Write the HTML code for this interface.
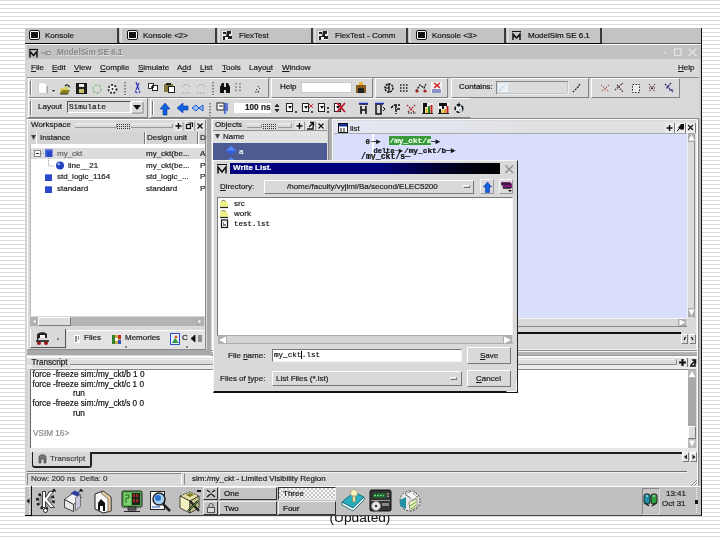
<!DOCTYPE html>
<html>
<head>
<meta charset="utf-8">
<title>ModelSim Write List</title>
<style>
html,body{margin:0;padding:0;}
body{width:720px;height:540px;overflow:hidden;position:relative;
 background:repeating-linear-gradient(to bottom,#dcdcdc 0,#dcdcdc 1px,#fff 1px,#fff 4px);
 font-family:"Liberation Sans",sans-serif;font-size:8px;color:#1c1c1c;}
.a{position:absolute;box-sizing:border-box;}
.t{position:absolute;white-space:nowrap;line-height:10px;font-size:8px;-webkit-text-stroke:0.200px currentColor;}
.m{font-family:"Liberation Mono",monospace;}
svg{position:absolute;overflow:visible;}
#desk{left:25px;top:28px;width:677px;height:488px;background:#d9d9d9;overflow:hidden;}
#cap{left:0;top:509.500px;width:720px;text-align:center;font-size:13.700px;line-height:16px;color:#111;}
.tab{top:0;height:15px;background:#c3c3c3;border-right:2px solid #3a3a3a;}
.tab .t{top:3px;left:20px;color:#1a1a1a;}
.rb{border:1px solid;border-color:#fff #7a7a7a #7a7a7a #fff;}
.sb{border:1px solid;border-color:#7a7a7a #fff #fff #7a7a7a;}
.grp{top:50px;height:20px;border:1px solid;border-color:#fff #808080 #808080 #fff;}
.grp2{top:70px;height:20px;border:1px solid;border-color:#fff #808080 #808080 #fff;}
.grip{position:absolute;left:1px;top:2px;width:1px;height:14px;background:#777;border-right:1px solid #fff;}
.ic{position:absolute;}
.pb{background:#c4c4c4;border:1px solid;border-color:#eee #333 #333 #eee;height:13px;}
</style>
</head>
<body>
<div id="cap" class="a" style="will-change:transform">(Updated)</div>
<div id="desk" class="a"><div id="in" class="a" style="left:0;top:0;width:677px;height:488px;will-change:transform;">
<!-- TOP TASK BAR -->
<div class="a" style="left:0;top:0;width:677px;height:16px;background:#c3c3c3;"></div>
<div class="a" style="left:0;top:14px;width:577px;height:1px;background:#777;"></div>
<div class="a" style="left:0;top:15px;width:677px;height:1px;background:#585858;"></div><div class="a" style="left:0;top:15px;width:577px;height:1px;background:#000;"></div>
<div class="a" style="left:0;top:16px;width:677px;height:1px;background:#fff;"></div>
<div class="a tab" style="left:0;width:94px;"><span class="t">Konsole</span><svg style="left:4px;top:2px" width="11" height="10"><rect x="0.500" y="0.500" width="10" height="9" rx="1.500" fill="#fff" stroke="#111"/><rect x="2" y="2" width="7" height="6" fill="#111"/></svg></div>
<div class="a tab" style="border-left:2px solid #dadada;left:95px;width:97px;"><span class="t" style="left:21px">Konsole &lt;2&gt;</span><svg style="left:5px;top:2px" width="11" height="10"><rect x="0.500" y="0.500" width="10" height="9" rx="1.500" fill="#fff" stroke="#111"/><rect x="2" y="2" width="7" height="6" fill="#111"/></svg></div>
<div class="a tab" style="border-left:2px solid #dadada;left:193px;width:95px;"><span class="t" style="left:19px">FlexTest</span><svg style="left:2px;top:2px" width="11" height="11"><rect x="0" y="1" width="10" height="9" fill="#eee"/><path d="M1 2h3v2h-3zM5 1h4v3h-2v2h3v3h-4v-2h-3v3h-2v-4h3z" fill="#222"/></svg></div>
<div class="a tab" style="border-left:2px solid #dadada;left:289px;width:94px;"><span class="t" style="left:19px">FlexTest - Comm</span><svg style="left:2px;top:2px" width="11" height="11"><rect x="0" y="1" width="10" height="9" fill="#eee"/><path d="M1 2h3v2h-3zM5 1h4v3h-2v2h3v3h-4v-2h-3v3h-2v-4h3z" fill="#222"/></svg></div>
<div class="a tab" style="border-left:2px solid #dadada;left:384px;width:97px;"><span class="t" style="left:21px">Konsole &lt;3&gt;</span><svg style="left:5px;top:2px" width="11" height="10"><rect x="0.500" y="0.500" width="10" height="9" rx="1.500" fill="#fff" stroke="#111"/><rect x="2" y="2" width="7" height="6" fill="#111"/></svg></div>
<div class="a tab" style="border-left:2px solid #dadada;left:482px;width:95px;background:#c6c6c6"><span class="t" style="left:19px;color:#111">ModelSim SE 6.1</span>
 <svg style="left:3px;top:3px" width="10" height="10"><path d="M0 0.500h9" stroke="#111"/><path d="M1 9V3l3.500 4L8 3v6" fill="none" stroke="#111" stroke-width="1.500"/></svg></div>

<!-- MODELSIM TITLE BAR -->
<div class="a" style="left:0;top:17px;width:677px;height:14px;background:#c2c2c2;"></div>
<div class="a" style="left:0;top:17px;width:2px;height:441px;background:#d4d4d4;"></div>
<svg style="left:4px;top:21px" width="10" height="9"><path d="M0 0.500h9" stroke="#111" stroke-width="1.200"/><path d="M1 8.500V2.500l3.500 4 3.500-4v6" fill="none" stroke="#111" stroke-width="1.500"/></svg>
<svg style="left:16px;top:21.500px" width="10" height="7"><path d="M0 3h5M5 0.500v5M6 1.500h3v3h-3z" stroke="#8a8a8a" fill="#eee"/></svg>
<span class="t" style="left:32px;top:20px;font-size:8.200px;font-weight:bold;color:#8e8e8e;text-shadow:0.700px 0.700px 0 #e4e4e4;">ModelSim SE 6.1</span>
<svg style="left:638px;top:20px" width="36" height="9"><rect x="1" y="4" width="1.500" height="1.500" fill="#e8e8e8"/><rect x="11.500" y="1" width="6.500" height="6.500" fill="none" stroke="#e8e8e8" stroke-width="1.100"/><path d="M25.500 0.500l8 7.500M33.500 0.500l-8 7.500" stroke="#e6e6e6" stroke-width="1.100"/></svg>

<!-- MENU BAR -->
<span class="t" style="left:6px;top:35px;"><u>F</u>ile</span>
<span class="t" style="left:27px;top:35px;"><u>E</u>dit</span>
<span class="t" style="left:49px;top:35px;"><u>V</u>iew</span>
<span class="t" style="left:75px;top:35px;"><u>C</u>ompile</span>
<span class="t" style="left:113px;top:35px;"><u>S</u>imulate</span>
<span class="t" style="left:152px;top:35px;">A<u>d</u>d</span>
<span class="t" style="left:175px;top:35px;"><u>L</u>ist</span>
<span class="t" style="left:197px;top:35px;"><u>T</u>ools</span>
<span class="t" style="left:224px;top:35px;">Layo<u>u</u>t</span>
<span class="t" style="left:257px;top:35px;"><u>W</u>indow</span>
<span class="t" style="left:653px;top:35px;"><u>H</u>elp</span>
<div class="a" style="left:2px;top:49px;width:673px;height:1px;background:#8a8a8a;"></div>
<!-- TOOLBAR ROW 1 -->
<div class="a grp" style="left:3px;width:241px;"><div class="grip"></div></div>
<div class="a grp" style="left:246px;width:102px;"></div>
<div class="a grp" style="left:350px;width:73px;"></div>
<div class="a grp" style="left:426px;width:138px;"></div>
<div class="a grp" style="left:566px;width:89px;"></div>
<svg style="left:0;top:50px" width="677" height="20">
 <!-- new -->
 <path d="M13.5 4.5h6l3 3v8h-9z" fill="#fff" stroke="#bbb" stroke-width="0.6"/><path d="M22 8v7" stroke="#888"/>
 <path d="M27 12h3l-1.5 2z" fill="#222"/>
 <!-- open -->
 <path d="M35 10h3l1-1h4v6h-8z" fill="#d8d060"/><path d="M35 16l2-4h8l-2 4z" fill="#8a8018"/><path d="M35 16h8" stroke="#333"/><path d="M40 8c2-2 4-1 4 1M43 8l2 1" stroke="#222" fill="none" stroke-width="1.200"/>
 <!-- save -->
 <rect x="51.5" y="5.500" width="10" height="10" fill="#222" stroke="#111"/><rect x="54" y="6" width="5" height="3" fill="#eee"/><rect x="54" y="11" width="5" height="4" fill="#c8c070"/>
 <!-- green -->
 <circle cx="72" cy="11" r="4" fill="none" stroke="#8cc48c" stroke-width="1.600" stroke-dasharray="2.500 1.500"/>
 <!-- gear -->
 <circle cx="87.500" cy="11" r="4" fill="#f0f0f0" stroke="#222" stroke-width="1.800" stroke-dasharray="1.800 1.600"/><circle cx="87.500" cy="11" r="1" fill="#222"/>
 <path d="M100 4v13" stroke="#333" stroke-dasharray="1.5 1.5"/>
 <!-- cut -->
 <path d="M111 4l3 8M114 5l-3 7M110 13l2 2M115 13l-1 2" stroke="#3038c0" stroke-width="1.2" fill="none"/>
 <!-- copy -->
 <rect x="123.500" y="5.500" width="5" height="5" fill="#fff" stroke="#333"/><rect x="127.500" y="7.500" width="5" height="5" fill="#fff" stroke="#222"/><path d="M126 9h3" stroke="#111" stroke-width="1.500"/>
 <!-- paste -->
 <rect x="139" y="6" width="9" height="8" fill="#807a38"/><rect x="143.500" y="8.500" width="6" height="6" fill="#fff" stroke="#222"/><rect x="141" y="5" width="5" height="2" fill="#222"/>
 <!-- undo redo -->
 <path d="M157 9c3-4 7-3 8 0M157 15h8" stroke="#999" stroke-dasharray="1.5 1.5" fill="none"/>
 <path d="M172 9c3-4 7-3 8 0M172 15h9" stroke="#999" stroke-dasharray="1.5 1.5" fill="none"/>
 <path d="M188 4v13" stroke="#333" stroke-dasharray="1.5 1.5"/>
 <!-- binoculars -->
 <path d="M195 15v-6l2-4h2v10zM201 15V5h2l2 4v6zM199 9h2v3h-2z" fill="#111"/>
 <path d="M211 5v10M215 5v10" stroke="#444" stroke-dasharray="1.5 1.8"/>
 <path d="M231 11l3 3M233 8l2 3M230 14h5" stroke="#333" stroke-dasharray="1.5 1"/>
 <!-- help group -->
 <rect x="276.500" y="4.500" width="50" height="10" fill="#fff" stroke="#aaa" stroke-width="0.5"/>
 <path d="M331 7h4v-3h3v3h3v8h-10z" fill="#8a5a20"/><rect x="334" y="4" width="4" height="3" fill="#f0b030"/><path d="M333 10h6v5h-6z" fill="#222"/>
 <!-- group 3 -->
 <circle cx="364" cy="10" r="4" fill="none" stroke="#111" stroke-width="1.500" stroke-dasharray="2 1"/><path d="M364 5v10M360 10h5" stroke="#111" stroke-width="1.200"/>
 <path d="M375 7h9M375 10h9M375 13h9" stroke="#111" stroke-width="1.600" stroke-dasharray="1.500 1.500"/>
 <path d="M391 13l4-6 4 3 2-4" stroke="#222" fill="none" stroke-width="1.4" stroke-dasharray="2 1"/><circle cx="392" cy="13" r="1.6" fill="#a02020"/><circle cx="400" cy="13" r="1.6" fill="#a02020"/>
 <rect x="406" y="4" width="11" height="11" fill="#f4f4f4"/><path d="M409 5l6 5M415 5l-6 5" stroke="#d01818" stroke-width="1.5"/><path d="M407 12h9M407 14h9" stroke="#2030a0"/>
 <!-- contains -->
 <rect x="471.500" y="3.500" width="71" height="12" fill="#dcdcdc" stroke="#888"/><path d="M472 16h71V4" stroke="#fff" fill="none"/>
 <rect x="473" y="5" width="10" height="9" fill="#e8f0f8"/><path d="M474 13l7-7" stroke="#9ab" stroke-dasharray="1 1"/>
 <path d="M548 14l2-2 3-3 2-3" stroke="#222" stroke-width="1.4" stroke-dasharray="1.4 1.6"/>
 <!-- group 5 -->
 <path d="M576 7l8 7M584 7l-8 7" stroke="#a03030" stroke-dasharray="1.5 1.2"/>
 <path d="M590 12l8-7M592 7l6 7" stroke="#503030" stroke-dasharray="1.5 1" stroke-width="1.3"/>
 <rect x="607.500" y="6.500" width="7" height="8" fill="#eee" stroke="#222" stroke-dasharray="1.5 1.5"/>
 <path d="M624 6l6 8M630 6l-6 8M624 10h6" stroke="#402020" stroke-dasharray="1.5 1"/>
 <path d="M640 6l8 8M646 5l-5 6M644 12h5" stroke="#302070" stroke-dasharray="1.8 0.8" stroke-width="1.2"/>
</svg>
<span class="t" style="left:255px;top:54px;color:#111">Help</span>
<span class="t" style="left:434px;top:54px;color:#111">Contains:</span>

<!-- TOOLBAR ROW 2 -->
<div class="a grp2" style="left:3px;width:120px;"><div class="grip"></div></div>
<div class="a grp2" style="left:125px;width:321px;border-right-color:#d9d9d9"><div class="grip"></div></div>
<span class="t" style="left:13px;top:74px;">Layout</span>
<div class="a" style="left:42px;top:73px;width:64px;height:12px;border:1px solid;border-color:#555 #fff #fff #555;background:#dcdcdc;"><span class="t m" style="left:1px;top:0;font-size:7.700px;">Simulate</span></div>
<svg style="left:0;top:70px" width="677" height="20">
 <rect x="106.500" y="3.500" width="11" height="11" fill="#dcdcdc" stroke="#fff"/><path d="M107 15h11V4" stroke="#777" fill="none"/><path d="M108 7h8l-4 5z" fill="#111"/>
 <!-- blue arrows -->
 <path d="M140 5l5 6h-3v6h-4v-6h-3z" fill="#1060e0" stroke="#0838a0" stroke-width="0.6"/>
 <path d="M152 10l6-5v3h5v4h-5v3z" fill="#1060e0" stroke="#0838a0" stroke-width="0.6"/>
 <path d="M167 10l4-3 3 3 4-3v6l-4-3-3 3z" fill="#9cc0f8" stroke="#1858d0" stroke-width="1"/>
 <path d="M185 5v13" stroke="#333" stroke-dasharray="1.5 1.5"/>
 <rect x="192" y="5" width="7" height="7" fill="#fff" stroke="#222"/><path d="M200 5v11M202 5v8" stroke="#1840c0" stroke-width="1.3"/><path d="M194 8h4" stroke="#222"/>
 <rect x="208.500" y="4.500" width="38" height="11" fill="#fff" stroke="#ccc" stroke-width="0.6"/>
 <path d="M249.500 9l2.500-3.500 2.500 3.500zM249.500 11l2.500 3.500 2.500-3.500z" fill="#222"/>
 <!-- run icons -->
 <g fill="#fff" stroke="#222"><rect x="261.500" y="5.500" width="6" height="8"/><rect x="277.500" y="5.500" width="6" height="8"/><rect x="293.500" y="5.500" width="6" height="8"/><rect x="309.500" y="5.500" width="6" height="8"/></g>
 <path d="M263 8h4l-2 3zM279 8h4l-2 3zM295 8h4l-2 3zM311 8h4l-2 3z" fill="#111"/>
 <path d="M270 14h2M286 14h2M302 14h2M302 10h2" stroke="#111" stroke-width="1.5"/>
 <path d="M284 6l4 4M288 6l-4 4" stroke="#d03030"/>
 <path d="M312 5l8 9M320 5l-8 9" stroke="#c01020" stroke-width="1.8"/>
 <!-- right icons -->
 <path d="M334 6h9M336 8v8M341 8v8M336 12h5" stroke="#111" stroke-width="1.6" fill="none"/><path d="M334 5.500h9" stroke="#1830b0" stroke-width="1.4"/>
 <path d="M350 6h8M351 7v9h5v-9" stroke="#111" stroke-width="1.5" fill="none"/><path d="M350 5.500h9" stroke="#1830b0" stroke-width="1.4"/><path d="M358 9l2 2-2 2" stroke="#111" fill="none"/>
 <path d="M366 10l3-3M369 7h6M371 7v9M375 11h-5" stroke="#111" stroke-width="1.5" fill="none" stroke-dasharray="3 1"/>
 <path d="M382 7l8 8M390 7l-8 8" stroke="#a02020" stroke-dasharray="1.600 1.200" stroke-width="1.3"/><path d="M383 15h8" stroke="#111" stroke-dasharray="1.5 1"/>
 <rect x="397" y="5" width="11" height="10" fill="#f0f0f0"/><path d="M398 5h4v4h-4z" fill="#111"/><path d="M399 15V8" stroke="#111" stroke-width="2"/><path d="M401.500 15v-5" stroke="#e0c020" stroke-width="2"/><path d="M404 15V8" stroke="#208020" stroke-width="2"/><path d="M406.500 15V7" stroke="#c02020" stroke-width="2"/><path d="M397 15.500h11" stroke="#222"/>
 <rect x="413" y="5" width="11" height="10" fill="#f0f0f0"/><path d="M414 5h8v3h-3v3h-2v-3h-3z" fill="#111"/><path d="M415 15v-4" stroke="#111" stroke-width="2"/><path d="M417.500 15v-3" stroke="#e0c020" stroke-width="2"/><path d="M420 15v-4" stroke="#e0a020" stroke-width="2"/><path d="M422.500 15V8" stroke="#c02020" stroke-width="2"/><path d="M413 15.500h11" stroke="#222"/>
 <circle cx="434" cy="10.500" r="3.800" fill="#e8eef0" stroke="#111" stroke-width="1.600" stroke-dasharray="3.500 1.500"/><path d="M434 4.500v4M432.500 6.500l1.500 2 1.500-2" stroke="#111" fill="none"/><circle cx="435.500" cy="12.500" r="2" fill="#c8d0d4"/>
</svg>
<span class="t" style="left:208px;top:75px;width:37.500px;text-align:right;font-weight:bold;font-size:8.200px;color:#222">100 ns</span>
<div class="a" style="left:2px;top:90px;width:673px;height:1px;background:#8a8a8a;"></div>
<div class="a" style="left:2px;top:91px;width:673px;height:1px;background:#f4f4f4;"></div>
<!-- WORKSPACE PANE -->
<div class="a" style="left:2px;top:91px;width:179px;height:231px;border:1px solid;border-color:#fff #8a8a8a #8a8a8a #fff;"></div>
<div class="a" style="left:182px;top:91px;width:4px;height:236px;background:#a8a8a8;"></div><div class="a" style="left:2px;top:322px;width:184px;height:5px;background:#a8a8a8;"></div>
<span class="t" style="left:6px;top:92px;">Workspace</span>
<svg style="left:0;top:91px" width="340" height="14">
 <path d="M50 5h41M106 5h41" stroke="#f6f6f6"/><path d="M50 8.500h41.500v-3.500M106 8.500h41.500v-3.500" stroke="#999" fill="none"/>
 <path d="M92 5.500h13M92 7.500h13M92 9.500h13" stroke="#333" stroke-dasharray="1 1"/>
 <rect x="149" y="2" width="9" height="10" fill="#e8e8e8"/><rect x="160" y="2" width="9" height="10" fill="#e8e8e8"/><rect x="171" y="2" width="8" height="10" fill="#e8e8e8"/><path d="M150.500 7h6M153.500 4v6" stroke="#111" stroke-width="1.400"/><path d="M158 3v9" stroke="#999"/>
 <rect x="161.500" y="5.500" width="4" height="4" fill="#eee" stroke="#111" stroke-width="1.200"/><path d="M163.500 4h4v4" stroke="#111" fill="none" stroke-width="1.100"/><path d="M169.500 3v9" stroke="#999"/>
 <path d="M172.500 4.500l5 5M177.500 4.500l-5 5" stroke="#111" stroke-width="1.300"/>
 <!-- objects header -->
 <path d="M222 5h14M253 5h13" stroke="#f6f6f6"/><path d="M222 8.500h14.500v-3.500M253 8.500h13.500v-3.500" stroke="#999" fill="none"/>
 <path d="M238 5.500h13M238 7.500h13M238 9.500h13" stroke="#333" stroke-dasharray="1 1"/>
 <rect x="270" y="2" width="9" height="10" fill="#e8e8e8"/><rect x="281" y="2" width="9" height="10" fill="#e8e8e8"/><rect x="292" y="2" width="8" height="10" fill="#e8e8e8"/><path d="M271.500 7h6M274.500 4v6" stroke="#111" stroke-width="1.400"/><path d="M279.500 3v9" stroke="#999"/>
 <path d="M282 10h6v-3M284 8l4-4M285 3.500h3.500v3.500" stroke="#111" fill="none" stroke-width="1.300"/><path d="M290.500 3v9" stroke="#999"/>
 <path d="M293.500 4.500l5 5M298.500 4.500l-5 5" stroke="#111" stroke-width="1.200"/>
</svg>
<!-- column header -->
<div class="a" style="left:5px;top:104px;width:175px;height:12px;background:#d4d4d4;"></div>
<div class="a" style="left:11px;top:104px;width:1px;height:12px;background:#fff;"></div>
<div class="a" style="left:119px;top:104px;width:1px;height:12px;background:#777;"></div><div class="a" style="left:120px;top:104px;width:1px;height:12px;background:#fff;"></div>
<div class="a" style="left:172px;top:104px;width:1px;height:12px;background:#777;"></div><div class="a" style="left:173px;top:104px;width:1px;height:12px;background:#fff;"></div>
<svg style="left:6px;top:107px" width="5" height="5"><path d="M0 0h5l-2.500 5z" fill="#444"/></svg>
<span class="t" style="left:15px;top:105px;">Instance</span>
<span class="t" style="left:122px;top:105px;">Design unit</span>
<span class="t" style="left:175px;top:105px;">D</span>
<!-- tree area -->
<div class="a" style="left:5px;top:115.500px;width:175px;height:172.500px;background:#fff;border-left:1px solid #b8b8b8;"></div>
<div class="a" style="left:6px;top:120px;width:174px;height:11px;background:#dcdcdc;"></div>
<svg style="left:0;top:116px" width="180" height="60">
 <rect x="9.500" y="6.500" width="6" height="6" fill="#fff" stroke="#888"/><path d="M11 9.500h3" stroke="#222"/><path d="M16 9.500h3" stroke="#999" stroke-dasharray="1 1"/>
 <rect x="20" y="5.500" width="7.500" height="7.500" fill="#2a48c8"/><path d="M20 5.500h7.500v1.500h-6v6h-1.500z" fill="#5070e0"/>
 <path d="M23.500 14v8h6" stroke="#999" stroke-dasharray="1 1" fill="none"/>
 <circle cx="35" cy="21.500" r="4" fill="#2040c0"/><circle cx="33.800" cy="20" r="1.500" fill="#88a8f0"/>
 <rect x="20" y="30" width="7" height="7" fill="#2a48c8"/><path d="M20 30h7v1h-7z" fill="#6a88e8"/>
 <rect x="20" y="42" width="7" height="7" fill="#2a48c8"/><path d="M20 42h7v1h-7z" fill="#6a88e8"/>
</svg>
<span class="t" style="left:32px;top:121px;color:#666">my_ckt</span>
<span class="t" style="left:43px;top:133px;">line__21</span>
<span class="t" style="left:32px;top:144px;">std_logic_1164</span>
<span class="t" style="left:32px;top:156px;">standard</span>
<span class="t" style="left:121px;top:121px;">my_ckt(be...</span>
<span class="t" style="left:121px;top:133px;">my_ckt(be...</span>
<span class="t" style="left:121px;top:144px;">std_logic_...</span>
<span class="t" style="left:121px;top:156px;">standard</span>
<span class="t" style="left:175px;top:121px;">A</span>
<span class="t" style="left:175px;top:133px;">P</span>
<span class="t" style="left:175px;top:144px;">P</span>
<span class="t" style="left:175px;top:156px;">P</span>
<!-- workspace hscroll -->
<div class="a" style="left:5px;top:289px;width:174px;height:9px;background:#b4b4b4;"></div>
<div class="a" style="left:5px;top:289px;width:8px;height:9px;background:#b0b0b0;"></div>
<div class="a rb" style="left:13px;top:289px;width:33px;height:9px;background:#dcdcdc;"></div>
<div class="a" style="left:171px;top:289px;width:8px;height:9px;background:#b0b0b0;"></div>
<svg style="left:5px;top:289px" width="175" height="9"><path d="M6 2v5l-4-2.500z" fill="#f4f4f4" stroke="#999" stroke-width="0.5"/><path d="M168 2v5l4-2.500z" fill="#f4f4f4" stroke="#999" stroke-width="0.5"/></svg>
<!-- workspace tabs -->
<div class="a" style="left:5px;top:301px;width:36px;height:19px;border:1px solid;border-color:#fff #555 #555 #fff;border-top:none;"></div>
<div class="a" style="left:42px;top:302px;width:138px;height:19px;background:#e3e3e3;border-top:1px solid #fff;"></div>
<svg style="left:0;top:301px" width="185" height="20">
 <path d="M12 6c0-3 8-4 10-1v4h-8l-2 3z" fill="#222"/><rect x="15" y="6" width="5" height="3" fill="#f4f4f4"/><circle cx="14" cy="14" r="2" fill="#a01818"/><circle cx="21" cy="14" r="2" fill="#a01818"/><path d="M11 12h13" stroke="#111" stroke-width="1.5"/>
 <path d="M32 10h2" stroke="#333"/>
 <rect x="49" y="6" width="6" height="8" fill="#fff"/><path d="M50 8h4M50 10h4M50 12h3" stroke="#222" stroke-width="1" stroke-dasharray="2 1"/>
 <rect x="87" y="6" width="9" height="9" fill="#c8b040"/><rect x="87" y="6" width="3" height="9" fill="#308030"/><rect x="93" y="6" width="3" height="4" fill="#c03020"/><rect x="90" y="9" width="3" height="3" fill="#f4f4f4"/><rect x="93" y="11" width="3" height="4" fill="#3050c0"/>
 <rect x="145.500" y="4.500" width="9" height="11" fill="#e8f0ff" stroke="#3050c0"/><path d="M147 14l3-5 4 5z" fill="#30a040"/><circle cx="151" cy="8" r="1.500" fill="#e06020"/>
 <path d="M170 6v7l-4-3.500zM174 6v7M176 6v7" stroke="#111" fill="#111" stroke-width="0.800"/>
 <path d="M45 19h0M100 18h2M161 18h2" stroke="#222"/>
</svg>
<span class="t" style="left:59px;top:305px;">Files</span>
<span class="t" style="left:100px;top:305px;">Memories</span>
<span class="t" style="left:157px;top:305px;">C</span>

<!-- OBJECTS PANE -->
<div class="a" style="left:187px;top:91px;width:117px;height:233px;border:1px solid;border-color:#fff #8a8a8a #8a8a8a #fff;"></div>
<div class="a" style="left:303.500px;top:91px;width:4px;height:232px;background:#acacac;"></div>
<span class="t" style="left:190px;top:92px;">Objects</span>
<div class="a" style="left:188px;top:102px;width:114px;height:1px;background:#909090;"></div><div class="a" style="left:188px;top:103px;width:114px;height:12px;background:#e2e2e2;"></div>
<svg style="left:190px;top:106px" width="5" height="5"><path d="M0 0h5l-2.500 5z" fill="#444"/></svg>
<span class="t" style="left:198px;top:104px;">Name</span>
<div class="a" style="left:188px;top:115px;width:114px;height:173px;background:#fff;"></div>
<div class="a" style="left:188px;top:115px;width:114px;height:18px;background:#4e5a92;"></div>
<svg style="left:201px;top:118px" width="10" height="10"><path d="M5 0l5 4.500-5 4.500-5-4.500z" fill="#3060e0"/><path d="M5 0l5 4.500h-10z" fill="#5888f8"/></svg>
<span class="t" style="left:214px;top:119px;color:#fff;">a</span>
<svg style="left:201px;top:129px" width="10" height="4"><path d="M5 0l5 4.500h-10z" fill="#5080f0"/></svg>
<!-- LIST PANE -->
<div class="a" style="left:307px;top:91px;width:365px;height:231px;border:1px solid;border-color:#fff #f0f0f0 #f0f0f0 #fff;"></div>
<div class="a" style="left:309px;top:93px;width:362px;height:12px;background:linear-gradient(to right,#e4e7f4 0,#e3e5ee 30%,#e0e0e0 60%);"></div>
<svg style="left:313px;top:95px" width="12" height="11"><rect x="0.500" y="0.500" width="9" height="9" fill="#fff" stroke="#111"/><rect x="1" y="1" width="8" height="2.500" fill="#1830a0"/><path d="M2 6h6M2 8h6" stroke="#111" stroke-dasharray="2 1"/></svg>
<span class="t" style="left:325px;top:95.500px;">list</span>
<svg style="left:638px;top:94px" width="34" height="12"><rect x="2" y="1" width="9" height="10" fill="#ececec"/><rect x="13" y="1" width="9" height="10" fill="#ececec"/><rect x="24" y="1" width="8" height="10" fill="#ececec"/><path d="M3.500 6h6M6.500 3v6" stroke="#111" stroke-width="1.400"/><path d="M11.500 1v10M22.500 1v10M32.500 1v10" stroke="#777"/><path d="M12.500 1v10M23.500 1v10" stroke="#fff"/><path d="M15 6l3-4h3v5l-2 1z" fill="#111"/><path d="M14 9l3-3" stroke="#111"/><path d="M25 3l5 5M30 3l-5 5" stroke="#111" stroke-width="1.200"/></svg>
<div class="a" style="left:309px;top:105px;width:353px;height:184.500px;background:#d9defc;border-top:1px solid #aaa;"></div>
<div class="a" style="left:347px;top:106px;width:1.500px;height:27px;background:#fff;"></div>
<div class="a" style="left:364px;top:108px;width:42px;height:9px;background:#3a9a3a;"></div>
<span class="t m" style="left:340.500px;top:108.500px;font-size:7.500px;color:#111;font-weight:bold">0<span style="margin-left:1.500px">─►</span></span>
<span class="t m" style="left:364.500px;top:108px;font-size:7.800px;color:#e8ffe8;font-weight:bold">/my_ckt/a</span>
<span class="t m" style="left:406px;top:108.500px;font-size:7.500px;color:#111;font-weight:bold">─►</span>
<span class="t m" style="left:348.500px;top:117.500px;font-size:7px;color:#111;font-weight:bold">delta─►</span>
<span class="t m" style="left:379px;top:117.500px;font-size:7.800px;color:#111;font-weight:bold">/my_ckt/b─►</span>
<span class="t m" style="left:336px;top:124px;font-size:8.200px;color:#111;font-weight:bold">/my_ckt/s─</span>
<!-- list vscroll -->
<div class="a" style="left:662px;top:105px;width:8px;height:185px;background:#dcdcdc;border-left:1px solid #f4f4f4;border-right:1px solid #8a8a8a;"></div>
<div class="a" style="left:663px;top:105px;width:7px;height:9px;background:#acacac;"></div>
<div class="a" style="left:663px;top:280px;width:7px;height:9px;background:#acacac;"></div>
<svg style="left:663px;top:105px" width="8" height="184"><path d="M0.500 7.500h6l-3-6z" fill="#fff"/><path d="M0.500 176.500h6l-3 6z" fill="#fff"/></svg>
<!-- list hscroll -->
<div class="a" style="left:309px;top:290px;width:353px;height:9px;background:#d8d8d8;border-top:1px solid #f4f4f4;border-bottom:1px solid #888;"></div>
<div class="a" style="left:653px;top:291px;width:8px;height:7px;background:#acacac;"></div>
<svg style="left:653px;top:291px" width="9" height="9"><path d="M1.500 0.500v6l6-3z" fill="#fff"/></svg>
<div class="a" style="left:309px;top:304px;width:347px;height:2px;background:#111;"></div>
<div class="a rb" style="left:656px;top:306px;width:7px;height:10px;"></div>
<div class="a rb" style="left:664px;top:306px;width:7px;height:10px;"></div>
<svg style="left:656px;top:306px" width="16" height="10"><path d="M3 6l1.500-3M10.500 3l1.500 3" stroke="#111" stroke-width="1.200"/></svg>
<!-- separator band -->
<div class="a" style="left:186px;top:322px;width:488px;height:1px;background:#8c8c8c;"></div>
<div class="a" style="left:186px;top:323px;width:488px;height:1px;background:#f4f4f4;"></div>
<div class="a" style="left:186px;top:324px;width:488px;height:4px;background:#b4b4b4;border-bottom:1px solid #9c9c9c;"></div>
<div class="a" style="left:2px;top:328px;width:672px;height:2px;background:#fafafa;"></div>

<!-- TRANSCRIPT PANE -->
<div class="a" style="left:2px;top:330px;width:672px;height:7px;background:#dcdcdc;"></div>
<div class="a" style="left:2px;top:337px;width:672px;height:4px;background:#ececec;"></div>
<span class="t" style="left:6.500px;top:329.500px;font-size:8.200px;background:#dcdcdc;padding-right:3px;color:#222">Transcript</span>
<svg style="left:0;top:328px" width="677" height="14"><path d="M45 3.500h605" stroke="#f0f0f0"/><path d="M45 8.500h606.500v-5" stroke="#8a8a8a" fill="none"/>
 <rect x="653" y="2" width="9" height="9" fill="#e4e4e4"/><rect x="663" y="2" width="9" height="9" fill="#e4e4e4"/>
 <path d="M654 6.500h7M657.500 3v7" stroke="#111" stroke-width="2.200"/><path d="M665 10h5v-3M666 9l4-4M667 4h3.500v3.500" stroke="#111" fill="none" stroke-width="1.500"/><path d="M662.500 2v9M672.500 2v9" stroke="#777"/></svg>
<div class="a" style="left:5px;top:341px;width:658px;height:79px;background:#fff;border-left:1px solid #666;border-top:1px solid #888;"></div>
<div class="a" style="left:663px;top:341px;width:8px;height:79px;background:#a8a8a8;"></div>
<div class="a" style="left:663px;top:342px;width:8px;height:8px;background:#b8b8b8;"></div>
<div class="a rb" style="left:663px;top:398px;width:8px;height:13px;background:#dcdcdc;"></div>
<div class="a" style="left:663px;top:411px;width:8px;height:9px;background:#b8b8b8;"></div>
<svg style="left:663px;top:341px" width="8" height="80"><path d="M1 8h6l-3-6z" fill="#fff"/><path d="M1 71.500h6l-3 6z" fill="#fff"/></svg>
<span class="t" style="left:7.500px;top:341.600px;color:#111;font-size:8.200px;">force -freeze sim:/my_ckt/b 1 0</span>
<span class="t" style="left:7.500px;top:351.500px;color:#111;font-size:8.200px;">force -freeze sim:/my_ckt/c 1 0</span>
<span class="t" style="left:48px;top:361.300px;color:#111;font-size:8.200px;">run</span>
<span class="t" style="left:7.500px;top:371.200px;color:#111;font-size:8.200px;">force -freeze sim:/my_ckt/s 0 0</span>
<span class="t" style="left:48px;top:381px;color:#111;font-size:8.200px;">run</span>
<span class="t" style="left:8px;top:400.500px;color:#8a8a8a;font-size:8.200px;">VSIM 16&gt;</span>
<div class="a" style="left:5px;top:420px;width:668px;height:4px;background:#e6e6e6;"></div>
<!-- transcript bottom tab -->
<div class="a" style="left:67px;top:424px;width:590px;height:1.500px;background:#222;"></div>
<div class="a" style="left:7px;top:424px;width:60px;height:16px;border:1px solid #222;border-top:none;border-radius:0 0 3px 3px;border-width:0 2px 2px 1px;"></div>
<svg style="left:13px;top:426px" width="10" height="10"><path d="M1 9V3c0-3 7-3 7 0v6h-2V5h-3v4z" fill="#777" stroke="#333" stroke-width="0.600"/></svg>
<span class="t" style="left:25px;top:426px;color:#444">Transcript</span>
<div class="a rb" style="left:657px;top:424px;width:7px;height:10px;background:#e8e8e8;"></div>
<div class="a rb" style="left:665px;top:424px;width:7px;height:10px;background:#e8e8e8;"></div>
<svg style="left:657px;top:424px" width="16" height="10"><path d="M5 2.500l-3 2.500 3 2.500zM10.500 2.500l3 2.500-3 2.500z" fill="#222"/></svg>
<!-- STATUS BAR -->
<div class="a" style="left:2px;top:443px;width:660px;height:1.400px;background:#707070;"></div>
<div class="a" style="left:2px;top:444px;width:660px;height:1px;background:#f4f4f4;"></div>
<div class="a" style="left:2px;top:445px;width:155px;height:12px;border:1px solid;border-color:#888 #fff #d9d9d9 #888;"></div>
<div class="a" style="left:159px;top:445px;width:505px;height:12px;border:1px solid;border-color:#d9d9d9 #d9d9d9 #d9d9d9 #888;"></div>
<span class="t" style="left:6px;top:446px;color:#3a3a3a">Now: 200 ns&nbsp; Delta: 0</span>
<span class="t" style="left:167px;top:446px;">sim:/my_ckt - Limited Visibility Region</span>
<svg style="left:666px;top:449px" width="9" height="9"><path d="M0 9l9-9M3 9l6-6M6 9l3-3" stroke="#888"/><path d="M1 9l8-8M4 9l5-5" stroke="#fff"/></svg>
<!-- window right border -->
<div class="a" style="left:672px;top:91px;width:1px;height:367px;background:#fff;"></div>
<div class="a" style="left:673px;top:91px;width:1px;height:367px;background:#888;"></div>
<div class="a" style="left:674px;top:91px;width:2px;height:367px;background:#bcbcbc;"></div>
<div class="a" style="left:674px;top:31px;width:2px;height:60px;background:#cecece;"></div>
<div class="a" style="left:676px;top:0;width:1px;height:489px;background:#111;"></div>
<!-- WRITE LIST DIALOG -->
<div class="a" style="left:188px;top:132px;width:305px;height:233px;background:#d9d9d9;border:1px solid;border-color:#f4f4f4 #222 #111 #f4f4f4;border-bottom-width:2px;"></div>
<svg style="left:192px;top:136px" width="11" height="10"><path d="M0 0.500h10" stroke="#111"/><path d="M1 9.500V3l4 5 4-5v6.500" fill="none" stroke="#111" stroke-width="1.500"/></svg>
<div class="a" style="left:205px;top:135px;width:270px;height:10.500px;background:linear-gradient(to right,#00007c 0,#00007c 55%,#000018 85%,#000 100%);"></div>
<span class="t" style="left:208px;top:135px;color:#fff;font-weight:bold;font-size:8px;">Write List.</span>
<svg style="left:480px;top:136.500px" width="10" height="10"><path d="M0.500 0.500l7.500 7.500M8 0.500l-7.500 7.500" stroke="#8c8c8c" stroke-width="1.400"/></svg>
<span class="t" style="left:195px;top:154px;"><u>D</u>irectory:</span>
<div class="a" style="left:239px;top:152px;width:210px;height:14px;border:1px solid;border-color:#fff #777 #777 #fff;"></div>
<span class="t" style="left:262px;top:154px;">/home/faculty/vyjimi/Ba/second/ELEC5200</span>
<div class="a" style="left:438px;top:157px;width:7px;height:3px;border:1px solid;border-color:#fff #777 #777 #fff;"></div>
<div class="a" style="left:455px;top:151px;width:14px;height:15px;border:1px solid;border-color:#f4f4f4 #999 #999 #f4f4f4;"></div>
<svg style="left:457.500px;top:153.500px" width="11" height="12"><path d="M4.500 0l4 5h-2v5.500h-4v-5.500h-2z" fill="#1060e0" stroke="#0838a0" stroke-width="0.600"/></svg>
<div class="a" style="left:474px;top:151px;width:14px;height:15px;border:1px solid;border-color:#f4f4f4 #999 #999 #f4f4f4;"></div>
<svg style="left:476px;top:153px" width="12" height="12"><path d="M0 1h9l2 2v4h-9z" fill="#801880"/><path d="M0 3h10M2 7h8" stroke="#222" stroke-width="1.400"/><path d="M7 9h4l-2 2z" fill="#111"/></svg>
<!-- file list -->
<div class="a" style="left:192px;top:169px;width:296px;height:139px;background:#fff;border:1px solid;border-color:#777 #f4f4f4 #aaa #777;"></div>
<svg style="left:194px;top:171px" width="14" height="32"><path d="M1 3.500c1-2 2-2 3-2s3 0 4 2l1 0v4.500h-8z" fill="#eef088"/><path d="M2.500 2.500c1-1.500 3-1.500 4 0" stroke="#555" fill="none" stroke-width="0.800"/><path d="M1 8.500h8" stroke="#222" stroke-width="1.200"/><path d="M1 13.500c1-2 2-2 3-2s3 0 4 2l1 0v4.500h-8z" fill="#eef088"/><path d="M2.500 12.500c1-1.500 3-1.500 4 0" stroke="#555" fill="none" stroke-width="0.800"/><path d="M1 18.500h8" stroke="#222" stroke-width="1.200"/><rect x="2.500" y="21" width="6" height="7.500" fill="#fff" stroke="#111" stroke-width="1.200"/><path d="M4 26h3M4 24h1" stroke="#111" stroke-width="1.200"/></svg>
<span class="t" style="left:209px;top:171px;">src</span>
<span class="t" style="left:209px;top:181px;">work</span>
<span class="t m" style="left:209px;top:191px;font-size:7.500px;color:#111">test.lst</span>
<!-- dialog hscroll -->
<div class="a" style="left:193px;top:308px;width:295px;height:8px;background:#d4d4d4;border-bottom:1px solid #aaa;"></div>
<div class="a" style="left:193px;top:308px;width:9px;height:8px;background:#b0b0b0;"></div>
<div class="a" style="left:478px;top:308px;width:9px;height:8px;background:#b0b0b0;"></div>
<svg style="left:193px;top:308px" width="295" height="8"><path d="M8 0.500v7l-7-3.500z" fill="#fff"/><path d="M286 0.500v7l7-3.500z" fill="#fff"/></svg>
<!-- file name -->
<span class="t" style="left:203px;top:323px;">File <u>n</u>ame:</span>
<div class="a" style="left:247px;top:321px;width:190px;height:13px;background:#fff;border:1px solid;border-color:#777 #f4f4f4 #f4f4f4 #777;"></div>
<span class="t m" style="left:249px;top:322px;font-size:7.600px;color:#111">my_ckt<span style="border-left:1px solid #000;margin-left:-0.500px"></span>.lst</span>
<div class="a" style="left:442px;top:319px;width:44px;height:17px;border:1px solid;border-color:#fff #777 #777 #fff;"></div>
<span class="t" style="left:455px;top:323px;"><u>S</u>ave</span>
<span class="t" style="left:195px;top:346px;">Files of <u>t</u>ype:</span>
<div class="a" style="left:247px;top:343px;width:190px;height:15px;border:1px solid;border-color:#fff #777 #777 #fff;"></div>
<span class="t" style="left:251px;top:346px;">List Files (*.lst)</span>
<div class="a" style="left:425px;top:349px;width:7px;height:3px;border:1px solid;border-color:#fff #777 #777 #fff;"></div>
<div class="a" style="left:442px;top:342px;width:44px;height:17px;border:1px solid;border-color:#fff #777 #777 #fff;"></div>
<span class="t" style="left:451px;top:346px;"><u>C</u>ancel</span>
<svg style="left:482px;top:353px" width="10" height="11"><path d="M9.500 0v10.500h-10" stroke="#fff" fill="none"/></svg>

<!-- KDE PANEL -->
<div class="a" style="left:0;top:458px;width:677px;height:30px;background:#c0c0c0;border-top:1px solid #fff;border-bottom:1px solid #444;"></div>
<div class="a" style="left:6px;top:458px;width:1px;height:30px;background:#111;"></div><div class="a" style="left:0;top:487px;width:7px;height:1px;background:#000;"></div>
<svg style="left:0;top:459px" width="8" height="28"><path d="M4.500 1v9M4.500 18v9" stroke="#f4f4f4" stroke-dasharray="1 1"/><path d="M4.500 11.500l-3 2.500 3 2.500z" fill="#111"/></svg>
<svg style="left:0;top:458px" width="677" height="30">
 <!-- K gear -->
 <g transform="translate(-1.500,-0.500)">
 <circle cx="22" cy="15" r="8" fill="none" stroke="#222" stroke-width="3" stroke-dasharray="2.500 2.500"/><circle cx="22" cy="15" r="6.500" fill="#9a9a9a"/>
 <path d="M19 6v16h3v-6l5 6h4l-7-8 6-8h-4l-4 6V6z" fill="#fff" stroke="#222" stroke-width="0.800"/><circle cx="22" cy="25" r="2" fill="#fff" stroke="#222"/>
 <path d="M28 6h5l-2.500-3z" fill="#111"/>
 <!-- desktop icon -->
 <path d="M41 14l8-6 9 4-8 7z" fill="#f4f4f4" stroke="#222" stroke-width="0.800"/><path d="M41 14v8l9 4v-7z" fill="#e8e8e8" stroke="#222" stroke-width="0.800"/><path d="M47 8l4-3 5 2v5z" fill="#3040a0"/><path d="M52 12l5-3v12l-5 4z" fill="#c8c8d8" stroke="#444" stroke-width="0.600"/>
 <path d="M55 6h5l-2.500-3z" fill="#111"/>
 </g>
 <!-- home -->
 <path d="M70 8l8-3 8 6v14l-8 2-8-4z" fill="#f8f8f8" stroke="#222"/><path d="M78 5l8 6v14l-3 1V13l-7-6z" fill="#e8c8a0" stroke="#333" stroke-width="0.600"/><path d="M73 24v-7l3-4 4 4v8h-2v-5h-3v5z" fill="#111"/>
 <!-- terminal -->
 <rect x="97" y="5" width="20" height="16" rx="1.500" fill="#50a848" stroke="#222"/><rect x="99" y="7" width="7" height="12" fill="#80d070"/><rect x="107" y="7" width="8" height="12" fill="#222"/><path d="M109 8v10M112 8v10" stroke="#c03020" stroke-width="1.600" stroke-dasharray="3 2"/><path d="M100 9h4v3h-3v5" stroke="#206020" fill="none"/><path d="M103 21h8v3h-8zM99 25.500h16" stroke="#222" fill="#666"/>
 <!-- find -->
 <rect x="125.500" y="5.500" width="14" height="18" fill="#f8f8f8" stroke="#222"/><circle cx="134" cy="13" r="6" fill="#a8d0f0" stroke="#222" stroke-width="1.500"/><circle cx="133" cy="12" r="3" fill="#2870d0"/><path d="M138 18l7 7" stroke="#222" stroke-width="2.500"/><path d="M127 21h8" stroke="#2850c0"/>
 <!-- package -->
 <path d="M155 10l10-4 9 4-9 5z" fill="#e8e4a8" stroke="#222" stroke-width="0.800" stroke-dasharray="2 1"/><path d="M155 10v12l10 5V15z" fill="#f4f0c0" stroke="#222" stroke-width="0.800"/><path d="M165 15v12l9-5V10z" fill="#c8c488" stroke="#222" stroke-width="0.800"/><path d="M161 9l4-2 4 2-4 2z" fill="#807820"/><path d="M163 25l10-10M165 15l9 10" stroke="#222" stroke-width="2.200"/><path d="M163 25l10-10" stroke="#50a040" stroke-width="1"/>
 <path d="M172 4h4v2h-4z" fill="#111"/>
 <!-- teal book -->
 <g transform="translate(0,-2)">
 <path d="M317 18l12-10 10 5-11 11z" fill="#28b0c0" stroke="#106070" stroke-width="0.800"/><path d="M317 18v3l11 6 11-11v-3l-11 11z" fill="#e8f8f8" stroke="#106070" stroke-width="0.800"/><circle cx="329" cy="9" r="3.500" fill="#f8f4c0" stroke="#aa8"/><path d="M327.500 12h3v6h-3z" fill="#e8e0a0" stroke="#664" stroke-width="0.500"/>
 </g>
 <!-- stereo -->
 <g transform="translate(0,-1)">
 <rect x="345" y="5" width="21" height="21" rx="1.500" fill="#333" stroke="#111"/><rect x="348" y="8" width="13" height="5" fill="#206030"/><path d="M349 10.500h10" stroke="#60e070" stroke-width="1.500" stroke-dasharray="2 1"/><path d="M346 15.500h19" stroke="#999"/><circle cx="351" cy="21" r="4.500" fill="#e8e8e8" stroke="#888"/><circle cx="351" cy="21" r="1.200" fill="#333"/><rect x="357" y="18" width="7" height="3" fill="#888"/><path d="M363 8v5" stroke="#bbb" stroke-width="1.500" stroke-dasharray="1.500 1"/>
 </g>
 <!-- misc -->
 <circle cx="385" cy="15" r="10" fill="#e8e8e8" stroke="#444" stroke-dasharray="2 1.500"/><path d="M375 14l6-3v12l-6-3z" fill="#2090a0"/><path d="M380 8l8-3 6 5-7 4z" fill="#f8f8f8" stroke="#333" stroke-width="0.700" stroke-dasharray="1.500 1"/><path d="M384 16l8-3v8l-7 4z" fill="#f4f4c0" stroke="#555" stroke-width="0.600"/><path d="M385 20l6-4M386 23l5-4" stroke="#50a040"/><path d="M381 9l5 3M388 7l4 4" stroke="#333" stroke-dasharray="1 1"/>
 <!-- systray -->
 <rect x="617.500" y="2.500" width="16" height="25" fill="#c4c4c4" stroke="#888"/><path d="M618 28h16V3" stroke="#f4f4f4" fill="none"/>
 <rect x="619" y="8" width="6" height="10" rx="2" fill="#2090a8" stroke="#222"/><rect x="626" y="8" width="6" height="10" rx="2" fill="#30a040" stroke="#222"/><path d="M620 17l4 3M631 17l-4 3" stroke="#222" stroke-width="1.500"/><path d="M621 10h2M628 10h2" stroke="#f4f4f4"/>
 <!-- right handle -->
 <path d="M671.500 2v26" stroke="#f4f4f4" stroke-dasharray="1 1"/><rect x="670" y="14" width="3" height="4" fill="#111"/>
</svg>
<div class="a pb" style="left:178px;top:459px;width:15px;"></div>
<div class="a pb" style="left:178px;top:473px;width:15px;height:14px;"></div>
<svg style="left:179px;top:459px" width="14" height="28"><path d="M3 3l8 7M11 3l-8 7" stroke="#222" stroke-width="1.400"/><path d="M3 6h8" stroke="#eee"/><rect x="3.500" y="20.500" width="7" height="5" fill="#d8d8d8" stroke="#555"/><path d="M5 20v-2c0-2 4-2 4 0v2" fill="none" stroke="#555"/></svg>
<div class="a pb" style="left:194px;top:459px;width:58px;"><span class="t" style="left:4px;top:1px;color:#111">One</span></div>
<div class="a pb" style="left:194px;top:473px;width:58px;height:14px;"><span class="t" style="left:4px;top:2px;color:#111">Two</span></div>
<div class="a pb" style="left:253px;top:459px;width:58px;border-color:#333 #eee #eee #333;background:#e0e0e0 repeating-conic-gradient(#fafafa 0 25%,#c4c4c4 0 50%) 0 0/4px 4px;"><span class="t" style="left:4px;top:1px;color:#111">Three</span></div>
<div class="a pb" style="left:253px;top:473px;width:58px;height:14px;"><span class="t" style="left:4px;top:2px;color:#111">Four</span></div>
<span class="t" style="left:641px;top:461px;color:#222">13:41</span>
<span class="t" style="left:637px;top:471px;color:#222">Oct 31</span>
<div class="a" style="left:676px;top:0;width:1px;height:488px;background:#111;"></div>
</div></div>
</body>
</html>
